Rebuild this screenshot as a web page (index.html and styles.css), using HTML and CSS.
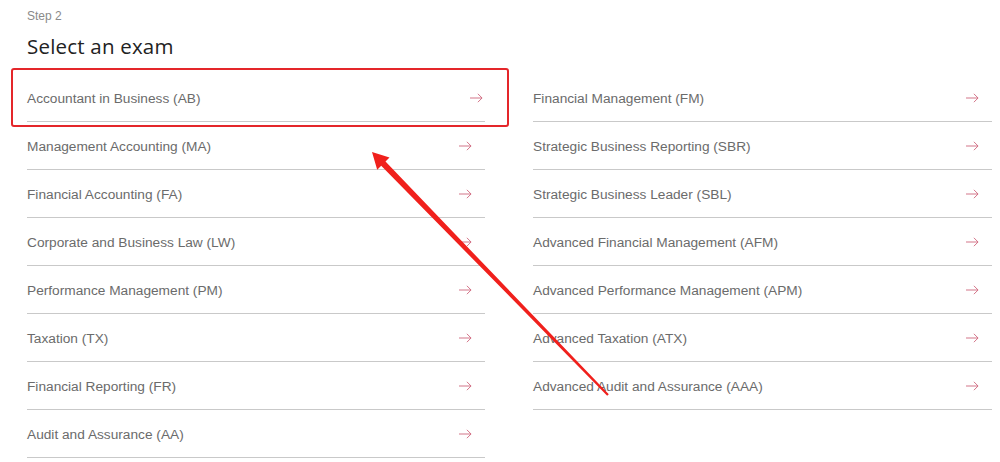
FILE: index.html
```html
<!DOCTYPE html>
<html>
<head>
<meta charset="utf-8">
<link rel="stylesheet" href="styles.css">
</head>
<body>
<div class="page">
  <div class="step">Step 2</div>
  <h1 class="title">Select an exam</h1>
  <div class="grid">
    <div class="col">
      <a class="row row-active"><span>Accountant in Business (AB)</span><svg class="arr" viewBox="0 0 14 10"><path d="M0 5H13M8.5 0.5L13 5L8.5 9.5"/></svg></a>
      <a class="row"><span>Management Accounting (MA)</span><svg class="arr" viewBox="0 0 14 10"><path d="M0 5H13M8.5 0.5L13 5L8.5 9.5"/></svg></a>
      <a class="row"><span>Financial Accounting (FA)</span><svg class="arr" viewBox="0 0 14 10"><path d="M0 5H13M8.5 0.5L13 5L8.5 9.5"/></svg></a>
      <a class="row"><span>Corporate and Business Law (LW)</span><svg class="arr" viewBox="0 0 14 10"><path d="M0 5H13M8.5 0.5L13 5L8.5 9.5"/></svg></a>
      <a class="row"><span>Performance Management (PM)</span><svg class="arr" viewBox="0 0 14 10"><path d="M0 5H13M8.5 0.5L13 5L8.5 9.5"/></svg></a>
      <a class="row"><span>Taxation (TX)</span><svg class="arr" viewBox="0 0 14 10"><path d="M0 5H13M8.5 0.5L13 5L8.5 9.5"/></svg></a>
      <a class="row"><span>Financial Reporting (FR)</span><svg class="arr" viewBox="0 0 14 10"><path d="M0 5H13M8.5 0.5L13 5L8.5 9.5"/></svg></a>
      <a class="row"><span>Audit and Assurance (AA)</span><svg class="arr" viewBox="0 0 14 10"><path d="M0 5H13M8.5 0.5L13 5L8.5 9.5"/></svg></a>
    </div>
    <div class="col">
      <a class="row"><span>Financial Management (FM)</span><svg class="arr" viewBox="0 0 14 10"><path d="M0 5H13M8.5 0.5L13 5L8.5 9.5"/></svg></a>
      <a class="row"><span>Strategic Business Reporting (SBR)</span><svg class="arr" viewBox="0 0 14 10"><path d="M0 5H13M8.5 0.5L13 5L8.5 9.5"/></svg></a>
      <a class="row"><span>Strategic Business Leader (SBL)</span><svg class="arr" viewBox="0 0 14 10"><path d="M0 5H13M8.5 0.5L13 5L8.5 9.5"/></svg></a>
      <a class="row"><span>Advanced Financial Management (AFM)</span><svg class="arr" viewBox="0 0 14 10"><path d="M0 5H13M8.5 0.5L13 5L8.5 9.5"/></svg></a>
      <a class="row"><span>Advanced Performance Management (APM)</span><svg class="arr" viewBox="0 0 14 10"><path d="M0 5H13M8.5 0.5L13 5L8.5 9.5"/></svg></a>
      <a class="row"><span>Advanced Taxation (ATX)</span><svg class="arr" viewBox="0 0 14 10"><path d="M0 5H13M8.5 0.5L13 5L8.5 9.5"/></svg></a>
      <a class="row"><span>Advanced Audit and Assurance (AAA)</span><svg class="arr" viewBox="0 0 14 10"><path d="M0 5H13M8.5 0.5L13 5L8.5 9.5"/></svg></a>
    </div>
  </div>
  <div class="highlight"></div>
  <svg class="pointer" width="1000" height="462" viewBox="0 0 1000 462">
    <polygon points="372,152 389.5,157.5 385.5,161.6 608.8,394.3 607.2,395.7 381.2,165.8 377.2,169.7" fill="#f0201c"/>
  </svg>
</div>
</body>
</html>
```

FILE: styles.css
```css
html, body {
  margin: 0;
  padding: 0;
  background: #ffffff;
}

.page {
  position: relative;
  width: 1000px;
  height: 462px;
  overflow: hidden;
  padding: 8px 0 0 27px;
  box-sizing: border-box;
  font-family: "Liberation Sans", Arial, sans-serif;
}

.step {
  font-size: 12px;
  line-height: 16px;
  color: #8a8a8a;
}

.title {
  margin: 8px 0 0 0;
  font-family: "Open Sans", "Liberation Sans", sans-serif;
  font-weight: 400;
  font-size: 20.5px;
  line-height: 28px;
  color: #222;
  letter-spacing: 0.2px;
}

.grid {
  display: grid;
  grid-template-columns: 458px 459px;
  column-gap: 48px;
  margin-top: 14px;
}

.col {
  display: flex;
  flex-direction: column;
}

.row {
  display: flex;
  align-items: center;
  justify-content: space-between;
  height: 47px;
  border-bottom: 1px solid #c9c9c9;
  font-size: 13.7px;
  color: #6b6b6b;
  padding-right: 13px;
  cursor: pointer;
}

.row span {
  padding-top: 1px;
}

.arr {
  width: 13px;
  height: 10px;
  fill: none;
  stroke: #cf6a80;
  stroke-width: 1;
}

.row-active .arr {
  transform: translateX(11px);
}

.highlight {
  position: absolute;
  left: 11px;
  top: 68px;
  width: 494px;
  height: 55px;
  border: 2.5px solid #e4262a;
  border-radius: 3px;
}

.pointer {
  position: absolute;
  left: 0;
  top: 0;
}
```
